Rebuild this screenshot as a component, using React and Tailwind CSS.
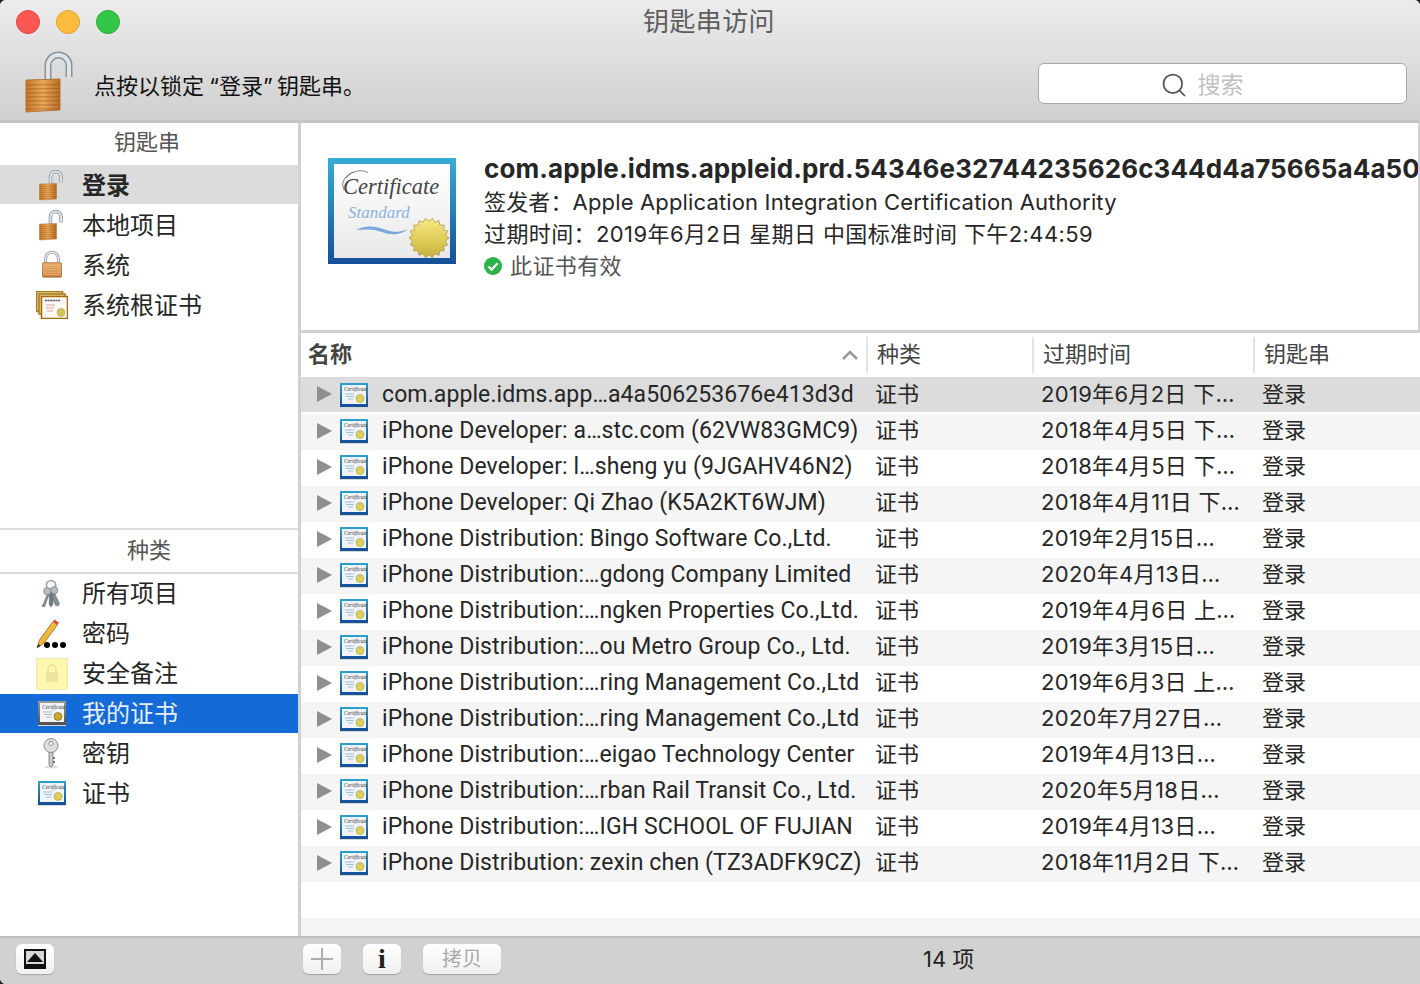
import { Search } from "lucide-react";

const FONT = "font-['Inter','Noto_Sans_CJK_SC',sans-serif]";

const keychains = [
  { name: "登录", icon: "open", bold: true, active: true },
  { name: "本地项目", icon: "open" },
  { name: "系统", icon: "closed" },
  { name: "系统根证书", icon: "root" },
];

const categories = [
  { name: "所有项目", icon: "keys" },
  { name: "密码", icon: "pencil" },
  { name: "安全备注", icon: "note" },
  { name: "我的证书", icon: "mycert", selected: true },
  { name: "密钥", icon: "key" },
  { name: "证书", icon: "cert" },
];

const rows = [
  ["com.apple.idms.app…a4a506253676e413d3d", "2019年6月2日 下…"],
  ["iPhone Developer: a…stc.com (62VW83GMC9)", "2018年4月5日 下…"],
  ["iPhone Developer: l…sheng yu (9JGAHV46N2)", "2018年4月5日 下…"],
  ["iPhone Developer: Qi Zhao (K5A2KT6WJM)", "2018年4月11日 下…"],
  ["iPhone Distribution: Bingo Software Co.,Ltd.", "2019年2月15日…"],
  ["iPhone Distribution:…gdong Company Limited", "2020年4月13日…"],
  ["iPhone Distribution:…ngken Properties Co.,Ltd.", "2019年4月6日 上…"],
  ["iPhone Distribution:…ou Metro Group Co., Ltd.", "2019年3月15日…"],
  ["iPhone Distribution:…ring Management Co.,Ltd", "2019年6月3日 上…"],
  ["iPhone Distribution:…ring Management Co.,Ltd", "2020年7月27日…"],
  ["iPhone Distribution:…eigao Technology Center", "2019年4月13日…"],
  ["iPhone Distribution:…rban Rail Transit Co., Ltd.", "2020年5月18日…"],
  ["iPhone Distribution:…IGH SCHOOL OF FUJIAN", "2019年4月13日…"],
  ["iPhone Distribution: zexin chen (TZ3ADFK9CZ)", "2018年11月2日 下…"],
];

function Padlock({ open, className }) {
  if (!open) {
    return (
      <svg viewBox="0 0 24 32" className={className}>
        <defs>
          <linearGradient id="bodyClosed" x1="0" x2="0" y1="0" y2="1">
            <stop offset="0" stopColor="#eaaa62" />
            <stop offset="1" stopColor="#c27c3a" />
          </linearGradient>
        </defs>
        <path d="M5 15V9.500a7 7 0 0 1 14 0V15" fill="none" stroke="#8f989f" strokeWidth="3.200" />
        <path d="M5 15V9.500a7 7 0 0 1 14 0V15" fill="none" stroke="#e6e9eb" strokeWidth="1.600" />
        <rect x="1.500" y="14" width="21" height="16" rx="1" fill="url(#bodyClosed)" stroke="#a8662c" strokeWidth="0.800" />
        <path d="M2 17h20M2 19.500h20M2 22h20M2 24.500h20M2 27h20" stroke="#f3c48c" strokeWidth="0.800" />
      </svg>
    );
  }
  return (
    <svg viewBox="0 0 48 62" className={className}>
      <defs>
        <linearGradient id="bodyOpen" x1="0" x2="1" y1="0" y2="0">
          <stop offset="0" stopColor="#c2782c" />
          <stop offset="0.5" stopColor="#eba758" />
          <stop offset="1" stopColor="#b56c24" />
        </linearGradient>
      </defs>
      <path d="M23 30V14.500a10.500 10.500 0 0 1 21 0V26" fill="none" stroke="#87929a" strokeWidth="7" />
      <path d="M23 30V14.500a10.500 10.500 0 0 1 21 0V26" fill="none" stroke="#dfe4e7" strokeWidth="4" />
      <path d="M1 29l34-1v31L1 61z" fill="url(#bodyOpen)" stroke="#a9672a" strokeWidth="0.800" />
      <path d="M1 34l34-.6M1 38l34-.6M1 42l34-.4M1 46l34-.4M1 50l34-.3M1 54l34-.2M1 58l34-.2" stroke="#8d4f18" strokeOpacity="0.500" strokeWidth="1" />
    </svg>
  );
}

function Seal({ cx, cy, r }) {
  const points = [];
  for (let i = 0; i < 36; i++) {
    const radius = i % 2 === 0 ? r : r * 0.84;
    const angle = (i * Math.PI) / 18;
    points.push(`${cx + radius * Math.cos(angle)},${cy + radius * Math.sin(angle)}`);
  }
  return <polygon points={points.join(" ")} fill="url(#sealFill)" stroke="#a89a50" strokeWidth="0.800" />;
}

function Certificate({ className }) {
  return (
    <svg viewBox="0 0 128 106" className={className}>
      <defs>
        <linearGradient id="frameBlue" x1="0" x2="0" y1="0" y2="1">
          <stop offset="0" stopColor="#37aed4" />
          <stop offset="1" stopColor="#164f99" />
        </linearGradient>
        <linearGradient id="paper" x1="0" x2="0" y1="0" y2="1">
          <stop offset="0" stopColor="#fff" />
          <stop offset="1" stopColor="#e9e9e9" />
        </linearGradient>
        <linearGradient id="sealFill" x1="0" x2="0" y1="0" y2="1">
          <stop offset="0" stopColor="#f7eb80" />
          <stop offset="1" stopColor="#c9b13a" />
        </linearGradient>
      </defs>
      <rect width="128" height="106" fill="url(#frameBlue)" />
      <rect x="6" y="6" width="116" height="94" fill="url(#paper)" />
      <path d="M18 20c6-8 18-9 22-5M16 32c-4-8 2-16 10-18" fill="none" stroke="#666" strokeWidth="0.800" />
      <text x="15" y="36" fontFamily="'Liberation Serif', serif" fontStyle="italic" fontSize="22.500" fill="#444">Certificate</text>
      <text x="20" y="60" fontFamily="'Liberation Serif', serif" fontStyle="italic" fontSize="17" fill="#8ab2e0">Standard</text>
      <path d="M28 72c12-6 22-3 30 0s16 2 22-1c-8 7-18 6-26 3s-15-3-26-2z" fill="#7aa8dc" />
      <Seal cx={101} cy={80} r={20} />
    </svg>
  );
}

function SmallCert({ className, gray }) {
  return (
    <svg viewBox="0 0 28 25" className={className}>
      <defs>
        <linearGradient id="smallBlue" x1="0" x2="0" y1="0" y2="1">
          <stop offset="0" stopColor="#2fa2cf" />
          <stop offset="1" stopColor="#144d96" />
        </linearGradient>
        <linearGradient id="smallGray" x1="0" x2="0" y1="0" y2="1">
          <stop offset="0" stopColor="#9a9a9a" />
          <stop offset="1" stopColor="#505050" />
        </linearGradient>
      </defs>
      <rect width="28" height="24" fill={gray ? "url(#smallGray)" : "url(#smallBlue)"} />
      <rect x="2" y="2" width="24" height="19" fill="#f1f4f7" />
      <text x="4" y="7.500" fontFamily="'Liberation Serif', serif" fontStyle="italic" fontSize="5.500" fill="#333">Certificate</text>
      <path d="M5 11h9M6 13.500h8M8 16h5" stroke={gray ? "#b5b5b5" : "#9cc0e8"} strokeWidth="1" />
      <circle cx="20" cy="15.500" r="4" fill={gray ? "#c9a92c" : "#dccf5e"} stroke={gray ? "#6e5c14" : "#a89a50"} strokeWidth="0.600" />
      <rect y="24" width="28" height="1" fill="#d8d8d8" />
    </svg>
  );
}

function RootCert({ className }) {
  return (
    <svg viewBox="0 0 32 28" className={className}>
      <rect x="0.500" y="0.500" width="26" height="20" fill="#e6cf8e" stroke="#a8791a" strokeWidth="1.500" />
      <rect x="3" y="3" width="26" height="20" fill="#e6cf8e" stroke="#a8791a" strokeWidth="1.500" />
      <rect x="5.500" y="5.500" width="26" height="22" fill="#fbfaf5" stroke="#a8660f" strokeWidth="1.500" />
      <path d="M9 9.500h15" stroke="#555" strokeWidth="1.500" strokeDasharray="2 .6" />
      <path d="M10 14h9M10 17h8M11 20h6" stroke="#e0a4a8" strokeWidth="1" />
      <circle cx="25" cy="21.500" r="4" fill="#d3c55a" stroke="#a89a50" strokeWidth="0.500" />
    </svg>
  );
}

function Keys({ className }) {
  return (
    <svg viewBox="0 0 26 32" className={className}>
      <g fill="#87939c" stroke="#5c666d" strokeWidth="0.600">
        <path d="M11 11l-6 15-2 3 3 1 1-3 5-13z" />
        <path d="M15 11l7 15-1 3-3-.5-1.500-3L12 13z" />
        <path d="M11.500 12h3.500v15l-2 3-2-3z" fill="#6f7b84" />
      </g>
      <circle cx="13" cy="6.500" r="5" fill="none" stroke="#a2abb2" strokeWidth="2" />
      <circle cx="9" cy="13" r="4" fill="#b4bdc4" stroke="#5c666d" strokeWidth="0.600" />
      <circle cx="16.500" cy="12" r="4" fill="#b4bdc4" stroke="#5c666d" strokeWidth="0.600" />
    </svg>
  );
}

function Pencil({ className }) {
  return (
    <svg viewBox="0 0 32 30" className={className}>
      <path d="M1 29l2.500-8L17 2.500l4.500 3.200L8 24z" fill="#f0b838" stroke="#8a6a1c" strokeWidth="0.800" />
      <path d="M17 2.500L18.500.6l4.500 3.200-1.500 1.900z" fill="#d8443e" />
      <path d="M1 29l1.200-4 2.500 1.800z" fill="#333" />
      <circle cx="11" cy="26" r="3" fill="#000" />
      <circle cx="19" cy="26" r="3" fill="#000" />
      <circle cx="27" cy="26" r="3" fill="#000" />
    </svg>
  );
}

function Note({ className }) {
  return (
    <svg viewBox="0 0 32 32" className={className}>
      <rect x="0.500" y="0.500" width="31" height="31" fill="#fdf8ae" stroke="#ece7b4" />
      <path d="M12 14v-3a4 4 0 0 1 8 0v3" fill="none" stroke="#ece5a0" strokeWidth="2" />
      <rect x="10" y="14" width="12" height="10" fill="#ece5a0" />
    </svg>
  );
}

function KeyIcon({ className }) {
  return (
    <svg viewBox="0 0 20 32" className={className}>
      <ellipse cx="10" cy="29" rx="7" ry="1.500" fill="#ddd" />
      <path d="M8 12h4v15l-2 2-2-2z" fill="#c9c9c9" stroke="#666" strokeWidth="0.700" />
      <path d="M12 19h2v2h-2zM12 23h2v2h-2z" fill="#777" />
      <circle cx="10" cy="7.500" r="7" fill="#dedede" stroke="#777" strokeWidth="0.800" />
      <circle cx="10" cy="5.500" r="2" fill="#fff" stroke="#666" strokeWidth="0.700" />
    </svg>
  );
}

function SidebarIcon({ type }) {
  if (type === "open") return <Padlock open className="w-6 h-8" />;
  if (type === "closed") return <Padlock className="w-[22px] h-[29px] ml-[2px]" />;
  if (type === "root") return <RootCert className="w-8 h-7 -ml-[3px]" />;
  if (type === "keys") return <Keys className="w-[24px] h-[30px]" />;
  if (type === "pencil") return <Pencil className="w-8 h-[30px] -ml-[3px]" />;
  if (type === "note") return <Note className="w-8 h-8 -ml-[3px]" />;
  if (type === "mycert") return <SmallCert gray className="w-7 h-[25px] -ml-[1px]" />;
  if (type === "key") return <KeyIcon className="w-5 h-8 ml-[2px]" />;
  return <SmallCert className="w-7 h-[25px] -ml-[1px]" />;
}

function SidebarRow({ item, nudge }) {
  let rowClass = "text-[#262626]";
  if (item.active) rowClass = "bg-[#dcdcdc] text-[#262626]";
  if (item.selected) rowClass = "bg-[#146ad6] text-[#e6eefb]";
  return (
    <div className="h-10">
      <div className={`h-[39px] flex items-center ${rowClass}`}>
        <div className="w-[82px] pl-[39px] shrink-0 flex items-center">
          <SidebarIcon type={item.icon} />
        </div>
        <span className={`text-2xl ${nudge ? "pt-[2px]" : ""} ${item.bold ? "font-bold" : ""}`}>{item.name}</span>
      </div>
    </div>
  );
}

function TableRow({ row, index }) {
  let rowClass = "h-9 pb-[3px]";
  if (index % 2 === 1) rowClass = "h-9 pb-[3px] bg-[#f5f5f5]";
  if (index === 0) rowClass = "h-[35px] -mt-px mb-[2px] pb-[1px] bg-[#dcdcdc]";
  return (
    <div className={`shrink-0 flex items-center text-[22px] text-[#262626] ${rowClass}`}>
      <div className="w-[567px] shrink-0 flex items-center pl-4">
        <div className="w-0 h-0 border-y-[8px] border-y-transparent border-l-[15px] border-l-[#8f8f8f]" />
        <SmallCert className="w-7 h-[25px] ml-2 mt-[2px] shrink-0" />
        <span className="ml-[14px] pt-[2px] whitespace-nowrap font-['Roboto','Noto_Sans_CJK_SC',sans-serif] text-[23px] tracking-[0.1px]">{row[0]}</span>
      </div>
      <div className="w-[166px] shrink-0 pl-[7px]">证书</div>
      <div className="w-[221px] shrink-0 pl-[7px] whitespace-nowrap tracking-[0.3px]">{row[1]}</div>
      <div className="pl-[7px]">登录</div>
    </div>
  );
}

function HeaderCell({ className, children }) {
  return (
    <div className={`h-9 flex items-center pb-[2px] border-r-2 border-[#e4e4e4] ${className}`}>{children}</div>
  );
}

function FooterButton({ className, children }) {
  return (
    <div className={`h-[30px] flex items-center justify-center rounded-md bg-gradient-to-b from-white to-[#f0f0f0] shadow-[0_1px_1px_#a0a0a0] ${className}`}>
      {children}
    </div>
  );
}

export default function App() {
  return (
    <div className={`w-[1420px] h-[984px] overflow-hidden bg-[#222] ${FONT}`}>
      <div className="h-full flex flex-col bg-white rounded-t-md rounded-bl-md overflow-hidden">
        {/* title bar + toolbar */}
        <div className="h-[123px] shrink-0 flex flex-col bg-gradient-to-b from-[#ececec] to-[#d0d0d0] border-b-[3px] border-[#c4c4c4]">
          <div className="h-[44px] relative flex items-center pl-4 gap-[16px]">
            <div className="w-6 h-6 rounded-full bg-[#fc5753] border border-[#e0443e]" />
            <div className="w-6 h-6 rounded-full bg-[#fdbc40] border border-[#dea034]" />
            <div className="w-6 h-6 rounded-full bg-[#33c748] border border-[#27aa35]" />
            <span className="absolute left-[643px] top-[6px] text-[26px] leading-8 tracking-[0.4px] text-[#5e5e5e]">钥匙串访问</span>
          </div>
          <div className="flex-1 flex items-start pl-[25px] pr-[13px]">
            <Padlock open className="w-12 h-[62px] mt-[7px] shrink-0" />
            <span className="ml-[21px] mt-[26px] text-[22px] leading-8 text-[#111] flex">
              点按以锁定
              <span className="w-[15px] text-right">“</span>
              登录
              <span className="w-[14px] text-left">”</span>
              钥匙串。
            </span>
            <div className="ml-auto mt-[19px] w-[369px] h-[41px] flex items-center justify-center gap-[10px] pr-[42px] pt-[2px] bg-white rounded-md border border-[#a8a8a8]">
              <Search className="w-[28px] h-[28px] text-[#555]" strokeWidth={1.500} />
              <span className="text-[23px] text-[#c0c0c0] pt-[2px]">搜索</span>
            </div>
          </div>
        </div>

        <div className="flex-1 min-h-0 flex">
          {/* sidebar */}
          <div className="w-[298px] shrink-0 flex flex-col">
            <div className="flex-1">
              <div className="h-[42px] flex items-center justify-center pr-1 pb-[3px] text-[22px] text-[#555]">钥匙串</div>
              {keychains.map((item) => (
                <SidebarRow key={item.name} item={item} nudge />
              ))}
            </div>
            <div className="h-[408px] border-t-2 border-[#dcdcdc]">
              <div className="h-[44px] flex items-center justify-center pb-[2px] text-[22px] text-[#555] border-b-2 border-[#dcdcdc]">种类</div>
              {categories.map((item) => (
                <SidebarRow key={item.name} item={item} />
              ))}
            </div>
          </div>

          {/* main */}
          <div className="flex-1 min-w-0 flex flex-col border-l-[3px] border-[#d1d1d1]">
            <div className="h-[210px] shrink-0 flex items-start pl-[27px] pt-[35px] border-b-[3px] border-r-2 border-[#d1d1d1] overflow-hidden text-[#262626]">
              <Certificate className="w-32 h-[106px] shrink-0" />
              <div className="ml-7 -mt-[5px] whitespace-nowrap">
                <div className="text-[26px] font-bold leading-8 tracking-[0.1px]">com.apple.idms.appleid.prd.54346e32744235626c344d4a75665a4a50</div>
                <div className="text-[22px] leading-8 mt-[1px] tracking-[0.15px]">签发者：Apple Application Integration Certification Authority</div>
                <div className="text-[22px] leading-8 tracking-[0.4px]">过期时间：2019年6月2日 星期日 中国标准时间 下午2:44:59</div>
                <div className="flex items-center text-[22px] leading-8 tracking-[0.4px] text-[#555]">
                  <svg viewBox="0 0 20 20" className="w-[18px] h-[18px] mr-2">
                    <circle cx="10" cy="10" r="10" fill="#29b34a" />
                    <path d="M5 10.500l3.500 3.500L15 7" fill="none" stroke="#fff" strokeWidth="2.400" />
                  </svg>
                  此证书有效
                </div>
              </div>
            </div>

            <div className="h-[45px] shrink-0 flex items-start pt-1 text-[22px] text-[#444]">
              <HeaderCell className="w-[567px] pl-[7px] font-semibold relative">
                名称
                <svg viewBox="0 0 16 10" className="absolute right-[8px] top-[13px] w-4 h-[10px]">
                  <path d="M1 9l7-7 7 7" fill="none" stroke="#999" strokeWidth="2.500" />
                </svg>
              </HeaderCell>
              <HeaderCell className="w-[166px] pl-[9px]">种类</HeaderCell>
              <HeaderCell className="w-[221px] pl-[9px]">过期时间</HeaderCell>
              <div className="h-9 flex items-center pb-[2px] pl-[9px]">钥匙串</div>
            </div>

            {rows.map((row, i) => (
              <TableRow key={i} row={row} index={i} />
            ))}
            <div className="h-9 shrink-0 bg-white" />
            <div className="flex-1 bg-[#f5f5f5]" />
          </div>
        </div>

        {/* bottom bar */}
        <div className="h-[48px] shrink-0 flex items-center pb-[4px] bg-[#d1d1d1] border-t-2 border-[#bdbdbd] relative">
          <FooterButton className="ml-4 w-[38px]">
            <div className="w-[22px] h-[20px] bg-[#111] flex items-center justify-center pb-[3px]">
              <div className="w-[18px] h-[13px] bg-[#d8d8d8] flex items-center justify-center">
                <div className="w-0 h-0 border-x-[8px] border-x-transparent border-b-[9px] border-b-[#111]" />
              </div>
            </div>
          </FooterButton>
          <FooterButton className="ml-[249px] w-[38px]">
            <svg viewBox="0 0 24 24" className="w-6 h-6">
              <path d="M12 1v22M1 12h22" stroke="#adadad" strokeWidth="2" />
            </svg>
          </FooterButton>
          <FooterButton className="ml-[22px] w-[38px]">
            <span className="font-['Liberation_Serif',serif] font-bold text-[28px] leading-none text-[#222]">i</span>
          </FooterButton>
          <FooterButton className="ml-[22px] w-[78px] h-[28px]">
            <span className="text-xl text-[#aaa]">拷贝</span>
          </FooterButton>
          <span className="absolute left-[923px] top-[5px] text-[22px] text-[#222]">14 项</span>
        </div>
      </div>
    </div>
  );
}
